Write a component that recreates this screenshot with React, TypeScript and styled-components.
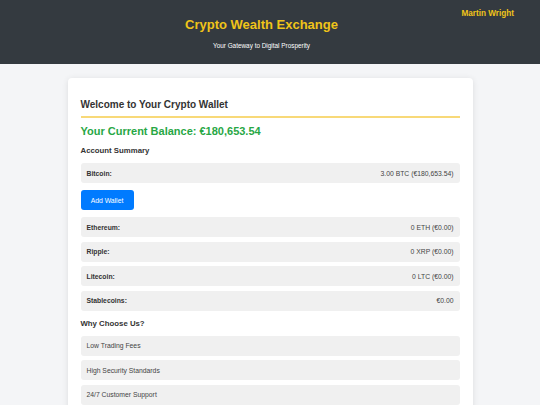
import React from "react";
import { styled, createGlobalStyle } from "styled-components";

const wallets = [
  { name: "Ethereum", value: "0 ETH (€0.00)" },
  { name: "Ripple", value: "0 XRP (€0.00)" },
  { name: "Litecoin", value: "0 LTC (€0.00)" },
  { name: "Stablecoins", value: "€0.00" },
];

const features = ["Low Trading Fees", "High Security Standards", "24/7 Customer Support"];

const App: React.FC = () => {
  return (
    <>
      <GlobalStyle />
      <Header>
        <User>Martin Wright</User>
        <Title>Crypto Wealth Exchange</Title>
        <Tagline>Your Gateway to Digital Prosperity</Tagline>
      </Header>
      <Main>
        <Card>
          <Heading>Welcome to Your Crypto Wallet</Heading>
          <Balance>Your Current Balance: €180,653.54</Balance>
          <SubHeading>Account Summary</SubHeading>
          <Row>
            <Label>Bitcoin:</Label>
            <Value>3.00 BTC (€180,653.54)</Value>
          </Row>
          <AddButton>Add Wallet</AddButton>
          <List>
            {wallets.map((item) => (
              <Row key={item.name}>
                <Label>{item.name}:</Label>
                <Value>{item.value}</Value>
              </Row>
            ))}
          </List>
          <SubHeading>Why Choose Us?</SubHeading>
          <List>
            {features.map((item) => (
              <Feature key={item}>{item}</Feature>
            ))}
          </List>
        </Card>
      </Main>
    </>
  );
};

export default App;

const GlobalStyle = createGlobalStyle`
  body {
    margin: 0;
    background: #f4f5f7;
    font-family: "Liberation Sans", Arial, sans-serif;
    color: #333;
  }
`;

const Header = styled.header`
  position: relative;
  height: 64px;
  background: #343a40;
  display: flex;
  flex-direction: column;
  align-items: center;
  padding: 17px 17px 0 0;
  box-sizing: border-box;
`;

const User = styled.div`
  position: absolute;
  top: 9px;
  right: 26px;
  font-size: 8.2px;
  font-weight: bold;
  color: #f0c419;
`;

const Title = styled.h1`
  margin: 0;
  font-size: 13px;
  line-height: 15px;
  font-weight: bold;
  color: #f0c419;
`;

const Tagline = styled.p`
  margin: 10px 0 0;
  font-size: 6.4px;
  line-height: 7px;
  color: #fff;
`;

const Main = styled.main`
  display: flex;
  justify-content: center;
  padding-top: 14px;
`;

const Card = styled.div`
  width: 405px;
  box-sizing: border-box;
  background: #fff;
  border-radius: 4px;
  box-shadow: 0 1px 6px rgba(0, 0, 0, 0.1);
  padding: 21px 13px 20px;
  display: flex;
  flex-direction: column;
`;

const Heading = styled.h2`
  margin: 0;
  font-size: 10px;
  line-height: 12px;
  font-weight: bold;
  color: #333;
  padding-bottom: 5px;
  border-bottom: 2px solid #f8d978;
`;

const Balance = styled.div`
  margin-top: 7px;
  font-size: 11px;
  line-height: 13px;
  font-weight: bold;
  color: #28a745;
`;

const SubHeading = styled.h3`
  margin: 8px 0 8px;
  font-size: 7.8px;
  line-height: 9px;
  font-weight: bold;
  color: #333;
`;

const List = styled.div`
  display: flex;
  flex-direction: column;
  gap: 4.5px;
`;

const Row = styled.div`
  height: 20px;
  display: flex;
  align-items: center;
  justify-content: space-between;
  padding: 0 6px;
  background: #f0f0f0;
  border-radius: 3px;
  font-size: 6.8px;
`;

const Label = styled.span`
  font-weight: bold;
  color: #333;
`;

const Value = styled.span`
  color: #444;
`;

const AddButton = styled.button`
  align-self: flex-start;
  width: 53px;
  height: 20px;
  margin: 7px 0 7px;
  border: none;
  border-radius: 3px;
  background: #007bff;
  color: #fff;
  font-family: inherit;
  font-size: 6.8px;
  cursor: pointer;
`;

const Feature = styled.div`
  height: 20px;
  display: flex;
  align-items: center;
  padding: 0 6px;
  background: #f0f0f0;
  border-radius: 3px;
  font-size: 6.8px;
  color: #444;
`;
